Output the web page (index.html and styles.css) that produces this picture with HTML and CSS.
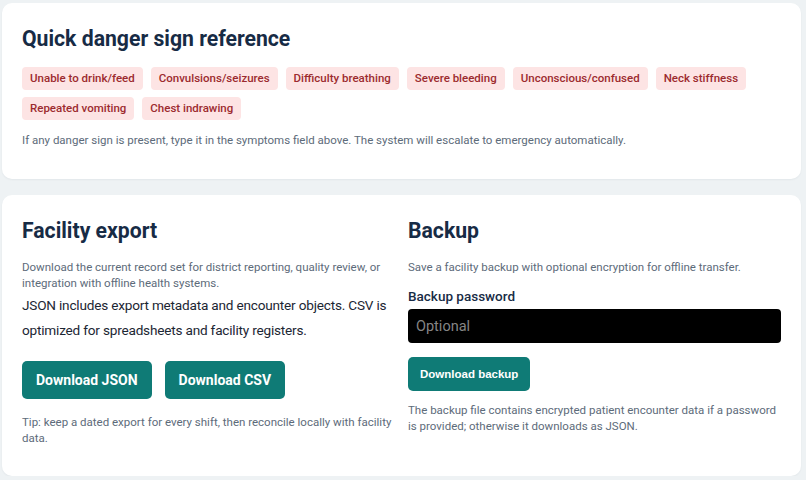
FILE: index.html
```html
<!DOCTYPE html>
<html lang="en">
<head>
<meta charset="utf-8">
<title>Reference</title>
<link rel="stylesheet" href="styles.css">
</head>
<body>
<div class="page">
  <section class="card danger">
    <h2 class="title">Quick danger sign reference</h2>
    <div class="chips">
      <span class="chip">Unable to drink/feed</span>
      <span class="chip">Convulsions/seizures</span>
      <span class="chip">Difficulty breathing</span>
      <span class="chip">Severe bleeding</span>
      <span class="chip">Unconscious/confused</span>
      <span class="chip">Neck stiffness</span>
      <span class="chip">Repeated vomiting</span>
      <span class="chip">Chest indrawing</span>
    </div>
    <p class="muted note">If any danger sign is present, type it in the symptoms field above. The system will escalate to emergency automatically.</p>
  </section>
  <section class="card split">
    <div class="col">
      <h2 class="title">Facility export</h2>
      <p class="muted desc">Download the current record set for district reporting, quality review, or integration with offline health systems.</p>
      <p class="body-text">JSON includes export metadata and encounter objects. CSV is optimized for spreadsheets and facility registers.</p>
      <div class="actions">
        <button class="btn">Download JSON</button>
        <button class="btn">Download CSV</button>
      </div>
      <p class="muted tip">Tip: keep a dated export for every shift, then reconcile locally with facility data.</p>
    </div>
    <div class="col">
      <h2 class="title">Backup</h2>
      <p class="muted desc">Save a facility backup with optional encryption for offline transfer.</p>
      <label class="label" for="pw">Backup password</label>
      <input class="input" id="pw" type="password" placeholder="Optional">
      <button class="btn btn-small">Download backup</button>
      <p class="muted tip-right">The backup file contains encrypted patient encounter data if a password is provided; otherwise it downloads as JSON.</p>
    </div>
  </section>
</div>
</body>
</html>
```
FILE: styles.css
```css
* { box-sizing: border-box; }
html, body { margin: 0; padding: 0; }
body {
  background: #eef2f4;
  font-family: Roboto, "Noto Sans", sans-serif;
  color: #172b45;
}
.page {
  padding: 3px 5px 0 2px;
  display: flex;
  flex-direction: column;
  gap: 16px;
}
.card {
  background: #ffffff;
  border-radius: 10px;
  box-shadow: 0 1px 2px rgba(20, 40, 60, 0.05);
}
.danger {
  height: 176px;
  padding: 22px 20px 0 20px;
}
.title {
  margin: 0;
  font-size: 21.2px;
  line-height: 28px;
  font-weight: 700;
  color: #172b45;
}
.chips {
  margin-top: 14px;
  display: flex;
  flex-wrap: wrap;
  gap: 7px 8px;
}
.chip {
  background: #fde4e4;
  color: #9c2b2f;
  font-size: 11.5px;
  font-weight: 500;
  line-height: 23px;
  height: 23px;
  padding: 0 8px;
  border-radius: 4px;
}
.muted {
  color: #5d6b7a;
  font-size: 11.5px;
  line-height: 16px;
  margin: 0;
}
.note { margin-top: 12px; }
.split {
  height: 281px;
  padding: 22px 20px 0 20px;
  display: grid;
  grid-template-columns: 1fr 1fr;
  column-gap: 13px;
}
.col {
  display: flex;
  flex-direction: column;
  align-items: flex-start;
}
.desc { margin-top: 14px; }
.body-text {
  margin: 2px 0 0 0;
  font-size: 13.6px;
  letter-spacing: -0.2px;
  line-height: 25px;
  color: #1c2633;
}
.actions {
  margin-top: 18px;
  display: flex;
  gap: 13px;
}
.btn {
  background: #0f7b76;
  color: #ffffff;
  border: none;
  border-radius: 5px;
  height: 38px;
  padding: 0 14px;
  font-family: Roboto, sans-serif;
  font-size: 14px;
  font-weight: 700;
}
.tip { margin-top: 15px; }
.label {
  margin-top: 12px;
  font-size: 13.5px;
  font-weight: 500;
  line-height: 18px;
  color: #172b45;
}
.input {
  margin-top: 4px;
  width: 100%;
  height: 34px;
  background: #000000;
  border: none;
  border-radius: 4px;
  padding: 0 8px;
  font-family: Roboto, sans-serif;
  font-size: 14.5px;
  color: #ffffff;
}
.input::placeholder { color: #858585; }
.btn-small {
  margin-top: 14px;
  height: 34px;
  padding: 0 12px;
  font-family: "Liberation Sans", Arial, sans-serif;
  font-size: 11.5px;
}
.tip-right { margin-top: 11px; }
```
